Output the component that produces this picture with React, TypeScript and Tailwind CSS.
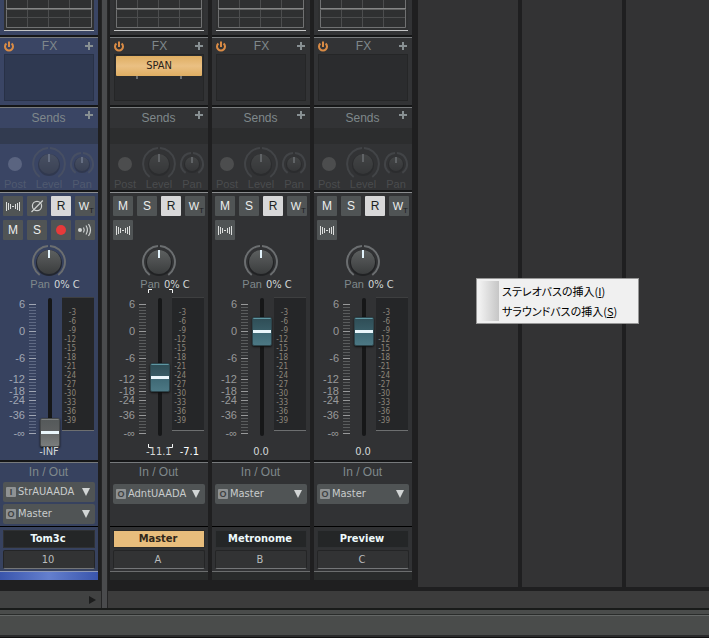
import clsx from "clsx";

type Route = { kind: "I" | "O"; label: string };

type Channel = {
  name: string;
  number: string;
  fader: number;
  level: string;
  peak?: string;
  routes: Route[];
  plugin?: string;
  track?: boolean;
  focused?: boolean;
};

const tomTrack: Channel = {
  name: "Tom3c",
  number: "10",
  fader: 0,
  level: "-INF",
  routes: [
    { kind: "I", label: "StrAUAADA" },
    { kind: "O", label: "Master" },
  ],
  track: true,
};

const buses: Channel[] = [
  {
    name: "Master",
    number: "A",
    fader: 55,
    level: "-11.1",
    peak: "-7.1",
    routes: [{ kind: "O", label: "AdntUAADA" }],
    plugin: "SPAN",
    focused: true,
  },
  { name: "Metronome", number: "B", fader: 101, level: "0.0", routes: [{ kind: "O", label: "Master" }] },
  { name: "Preview", number: "C", fader: 101, level: "0.0", routes: [{ kind: "O", label: "Master" }] },
];

// dB label -> offset in px below the +6 mark
const scaleMarks: [string, number][] = [
  ["6", 0],
  ["0", 27],
  ["-6", 54],
  ["-12", 75],
  ["-18", 87],
  ["-24", 96],
  ["-36", 111],
  ["-∞", 129],
];
const ticks = Array.from({ length: 44 }, (_, i) => i * 3);
const meterMarks = [-3, -6, -9, -12, -15, -18, -21, -24, -27, -30, -33, -36, -39];

const uiFont = "font-['DejaVu_Sans_Condensed','DejaVu_Sans',sans-serif]";

function PowerIcon() {
  return (
    <svg width="10" height="11" viewBox="0 0 10 11" fill="none" stroke="#d98b45" strokeWidth="2" className="block">
      <path d="M2.400 2.500A4 4 0 1 0 7.600 2.500" />
      <path d="M5 0.500V6" />
    </svg>
  );
}

function PlusIcon() {
  return (
    <svg width="8" height="8" viewBox="0 0 8 8" fill="#889093" className="block">
      <path d="M3 0h2v3h3v2H5v3H3V5H0V3h3z" />
    </svg>
  );
}

function InterleaveIcon() {
  return (
    <svg width="20" height="20" viewBox="0 0 20 20" fill="#dcdedd">
      <path d="M3 6h1v9H3zM5 7h1v7H5zM7 8h1v5H7zM9 10h2v1H9zM12 8h1v5h-1zM14 7h1v7h-1zM16 6h1v9h-1z" />
    </svg>
  );
}

function PhaseIcon() {
  return (
    <svg width="20" height="20" viewBox="0 0 20 20" fill="none" stroke="#cfd2d1" strokeWidth="1.2">
      <circle cx="10" cy="10" r="4.600" />
      <path d="M4.500 16L15.800 4.500" />
    </svg>
  );
}

function EchoIcon() {
  return (
    <svg width="20" height="20" viewBox="0 0 20 20" fill="none" stroke="#cfd2d1" strokeWidth="1.200">
      <circle cx="5" cy="10" r="2" fill="#cfd2d1" stroke="none" />
      <path d="M8.500 7.500Q10 10 8.500 12.500M11 5.500Q13.800 10 11 14.500M13.500 4Q17.500 10 13.500 16" />
    </svg>
  );
}

function Knob({ size, label, dim }: { size: "sm" | "md" | "lg"; label: string; dim?: boolean }) {
  const r = size === "sm" ? 7 : size === "md" ? 10 : 12;
  const ring = size === "sm" ? 11 : 16;
  const box = ring * 2 + 2;
  const c = box / 2;
  const s = ring * 0.58;
  const h = ring * 0.81;
  return (
    <span className={clsx("relative block", dim && "opacity-40")}>
      <svg width={box} height={box} className="block overflow-visible">
        <defs>
          <linearGradient id={`knob-${size}`} x1="0" y1="0" x2="0" y2="1">
            <stop offset="0" stopColor="#5d6060" />
            <stop offset="1" stopColor="#3b3d3e" />
          </linearGradient>
        </defs>
        <path
          d={`M${c - s} ${c + h}A${ring} ${ring} 0 0 1 ${c - 1} ${c - ring}M${c + 1} ${c - ring}A${ring} ${ring} 0 0 1 ${c + s} ${c + h}`}
          fill="none"
          stroke={dim ? "#5b5f63" : "#6b6e70"}
          strokeWidth="2"
        />
        <circle cx={c} cy={c + 1} r={r + 1} fill="#1c1d1f" opacity="0.75" />
        <circle cx={c} cy={c} r={r} fill={`url(#knob-${size})`} />
        <rect x={c - 1} y={c - r} width="2" height={size === "sm" ? 6 : 8} fill={dim ? "#a6acb0" : "#e2f3fb"} />
      </svg>
      <input type="range" aria-label={label} min={-100} max={100} defaultValue={0} className="absolute inset-0 h-full w-full opacity-0" />
    </span>
  );
}

function EqGraph({ track }: { track?: boolean }) {
  return (
    <div className={clsx("h-[35px]", track ? "bg-[#3a4564]" : "bg-[#323335]")}>
      <svg width="98" height="35" className="block">
        <rect x="4" width="90" height="31" fill="#2f3031" />
        <path d="M27.500 0V27M48.500 0V27M69.500 0V27M7 17.500H92" stroke="#4c4d4e" />
        <path d="M6.500 0V27.500H91.500V0" stroke="#707172" fill="none" />
        <path d="M6 8.500H92" stroke="#858686" strokeWidth="1" />
        <path d="M6 9.500H92" stroke="#606161" />
        <path d="M4 30.500H94" stroke="#c3c4c5" />
      </svg>
    </div>
  );
}

function FxRack({ channel }: { channel: Channel }) {
  const { track, plugin } = channel;
  return (
    <section className={clsx("h-[68px] border-t border-[#777a7c]", track ? "bg-[#3a4564]" : "bg-[#323335]")}>
      <div className="flex h-4 items-center justify-between pl-1 pr-[5px]">
        <button aria-label="FX power">
          <PowerIcon />
        </button>
        <span className="text-xs leading-4 text-[#7f888b]">FX</span>
        <button aria-label="Add FX">
          <PlusIcon />
        </button>
      </div>
      <div
        className={clsx(
          "mx-1 h-[47px] border p-px",
          track ? "border-[#283146] bg-[#2f3951]" : "border-[#252627] bg-[#2b2c2e]"
        )}
      >
        {plugin && (
          <>
            <button
              className={clsx(
                "block h-5 w-full rounded-[1px] bg-linear-to-b from-[#dfae62] via-[#eac083] to-[#dfae62] text-[11px] leading-5 text-[#2a2118]",
                uiFont
              )}
            >
              {plugin}
            </button>
            <div className="flex justify-between px-5">
              <i className="h-[3px] w-0.5 bg-[#6b6e70]" />
              <i className="h-[3px] w-0.5 bg-[#6b6e70]" />
            </div>
          </>
        )}
      </div>
    </section>
  );
}

function Sends({ track }: { track?: boolean }) {
  return (
    <section className={clsx("border-t border-[#777a7c]", track ? "bg-[#3a4564]" : "bg-[#323335]")}>
      <div className="flex h-5 justify-between pl-3 pr-[5px]">
        <span />
        <span className="text-xs leading-5 text-[#7f888b]">Sends</span>
        <button aria-label="Add send" className="h-[14px]">
          <PlusIcon />
        </button>
      </div>
      <div className={clsx("h-4", track ? "bg-[#323b50]" : "bg-[#2c2d2e]")} />
      <div className="h-[46px] pt-0.5">
        <div className="grid h-9 grid-cols-[30px_38px_28px] items-center justify-items-center">
          <button aria-label="Post" className={clsx("size-[14px] rounded-full", track ? "bg-[#5a6480]" : "bg-[#4c4d4e]")} />
          <Knob size="md" label="Send level" dim />
          <Knob size="sm" label="Send pan" dim />
        </div>
        <div
          className={clsx(
            "-mt-1 grid h-3 grid-cols-[30px_38px_28px] justify-items-center text-[11px] leading-3",
            track ? "text-[#505a70]" : "text-[#4a4c4e]"
          )}
        >
          <span>Post</span>
          <span>Level</span>
          <span>Pan</span>
        </div>
      </div>
    </section>
  );
}

const stripButton = "relative flex size-5 items-center justify-center rounded-[1px] bg-[#505455] text-xs text-[#eceeed]";

function StripButtons({ track }: { track?: boolean }) {
  const mute = <button className={stripButton}>M</button>;
  const solo = <button className={stripButton}>S</button>;
  return (
    <div className="grid h-11 grid-cols-[repeat(4,20px)] content-start gap-1 px-[3px]">
      {track ? (
        <>
          <button aria-label="Interleave" className={stripButton}>
            <InterleaveIcon />
          </button>
          <button aria-label="Phase" className={stripButton}>
            <PhaseIcon />
          </button>
        </>
      ) : (
        <>
          {mute}
          {solo}
        </>
      )}
      <button className="size-5 rounded-[1px] bg-[#d8d8d9] text-xs leading-5 text-[#1d1e1f]">R</button>
      <button className={stripButton}>
        <span className="pr-0.5 text-[11px]">W</span>
        <span className="absolute bottom-px right-px text-[8px] leading-[8px] text-[#1f2122]">T</span>
      </button>
      {track ? (
        <>
          {mute}
          {solo}
          <button aria-label="Record arm" className={stripButton}>
            <span className="size-2.5 rounded-full bg-[#e63a3a]" />
          </button>
          <button aria-label="Input echo" className={stripButton}>
            <EchoIcon />
          </button>
        </>
      ) : (
        <button aria-label="Interleave" className={stripButton}>
          <InterleaveIcon />
        </button>
      )}
    </div>
  );
}

function Fader({ channel }: { channel: Channel }) {
  const { track, focused } = channel;
  return (
    <div className="relative flex h-[147px]">
      <svg width="36" height="147" className="block shrink-0">
        {ticks.map((y) => (
          <rect key={y} x="29" y={y + 7} width="7" height="1" fill={track ? "#5f6a84" : "#5a5c5d"} />
        ))}
        {scaleMarks.map(([label, y]) => (
          <g key={label}>
            <rect x="29" y={y + 7} width="7" height="1" fill={track ? "#a0a6b3" : "#98999a"} />
            <text x="25" y={y + 11} textAnchor="end" fontSize="11" fill={track ? "#a0a6b3" : "#98999a"}>
              {label}
            </text>
          </g>
        ))}
      </svg>
      <div className="relative ml-1 w-5">
        <div className="mx-auto mt-px h-[138px] w-1 rounded-sm bg-[#161718]" />
        <input
          type="range"
          aria-label={`${channel.name} volume`}
          min={0}
          max={128}
          defaultValue={channel.fader}
          className={clsx(
            "absolute -top-[7px] left-0 m-0 h-[157px] w-5 appearance-none bg-transparent outline-none [direction:rtl] [writing-mode:vertical-lr]",
            "[&::-webkit-slider-thumb]:h-[29px] [&::-webkit-slider-thumb]:w-5 [&::-webkit-slider-thumb]:appearance-none [&::-webkit-slider-thumb]:rounded-[2px] [&::-webkit-slider-thumb]:border [&::-webkit-slider-thumb]:shadow-[0_1px_2px_#111]",
            track
              ? "[&::-webkit-slider-thumb]:border-[#454849] [&::-webkit-slider-thumb]:bg-[linear-gradient(#7d8080_0_1px,#55595a_1px,#5c5f60_12px,#e9f6fb_12px_15px,#676a6a_15px,#7a7d7d)]"
              : "[&::-webkit-slider-thumb]:border-[#2d454c] [&::-webkit-slider-thumb]:bg-[linear-gradient(#5f97a3_0_1px,#2f4e57_1px,#385b65_12px,#e9f6fb_12px_15px,#3f6975_15px,#4c7884)]"
          )}
        />
      </div>
      <div
        className={clsx(
          "ml-0.5 flex h-[134px] w-8 flex-col border-b border-t border-b-[#6d6f70] border-t-[#3e3f40] bg-[#252628]",
          "pb-2 pt-[10px]"
        )}
      >
        <ol className={clsx("flex w-[14px] flex-1 flex-col justify-between text-right text-[8px] leading-[9px] text-[#8c857a]", uiFont)}>
          {meterMarks.map((m) => (
            <li key={m}>{m}</li>
          ))}
        </ol>
      </div>
      {focused && (
        <svg width="25" height="161" className="absolute -top-2 left-[38px]" fill="none" stroke="#f2f4f4">
          <path d="M.500 4V.500H4M21 .500h3.500V4M.500 155v3.500H4M21 158.500h3.500V155" />
        </svg>
      )}
    </div>
  );
}

function RouteSelect({ route }: { route: Route }) {
  return (
    <label className="relative block h-5">
      <span className="absolute left-[3px] top-[5px] size-[10px] rounded-[1px] bg-[#8f9293] text-center text-[9px] font-bold leading-[10px] text-[#3e4142]">
        {route.kind}
      </span>
      <select
        aria-label={route.kind === "I" ? "Input" : "Output"}
        className={clsx(
          "block h-5 w-full appearance-none overflow-hidden rounded-[2px] bg-[#505455] pl-[15px] pr-[17px] text-[11px] leading-5 text-[#c9cccc]",
          uiFont
        )}
      >
        <option>{route.label}</option>
      </select>
      <svg width="8" height="8" className="absolute right-[5px] top-1.5" fill="#d2d5d5">
        <path d="M0 0h8L4 8z" />
      </svg>
    </label>
  );
}

function ChannelStrip({ channel }: { channel: Channel }) {
  const { track, focused } = channel;
  const tone = track ? "bg-[#37425f]" : "bg-[#313234]";
  return (
    <article className="flex w-[98px] shrink-0 flex-col gap-0.5 bg-[#151617]">
      <EqGraph track={track} />
      <FxRack channel={channel} />
      <Sends track={track} />
      <section className={clsx("border-t border-[#8b8d8f] pb-px pt-[3px]", tone)}>
        <StripButtons track={track} />
        <div className="flex h-[38px] justify-center pt-[5px]">
          <Knob size="lg" label={`${channel.name} pan`} />
        </div>
        <p className="relative flex h-3 items-baseline justify-center gap-1 pl-3 text-[11px] leading-3 text-[#7f888b]">
          Pan <span className={clsx("text-[#d3d7d8]", uiFont)}>0% C</span>
        </p>
        <div className="pt-[7px]">
          <Fader channel={channel} />
        </div>
        <p
          className={clsx(
            "relative flex h-[15px] justify-center gap-2 text-[11px] leading-4 text-[#d3d7d8]",
            channel.peak && "pl-[27px]",
            uiFont
          )}
        >
          {channel.level}
          {channel.peak && <span className="text-white">{channel.peak}</span>}
        </p>
      </section>
      <div>
        <section className={clsx("h-16 border-t border-[#777a7c] px-[3px]", tone)}>
          <h3 className="h-[19px] pr-px text-center text-xs leading-[18px] text-[#7f888b]">In / Out</h3>
          <div className={clsx("flex flex-col gap-0.5", !track && "pt-0.5")}>
            {channel.routes.map((r) => (
              <RouteSelect key={r.kind} route={r} />
            ))}
          </div>
        </section>
        <section className={clsx("h-[45px] border-t border-t-black px-[3px] pt-[3px]", tone)}>
          <div
            className={clsx(
              "h-[18px] border pr-0.5 text-center text-[11px] font-bold leading-4",
              focused ? "border-[#2b2b2b] bg-[#e8bd7c] text-[#31271a]" : "border-[#2f3133] bg-[#242627] text-[#eefafc]",
              uiFont
            )}
          >
            {channel.name}
          </div>
          <div
            className={clsx(
              "mt-0.5 h-[19px] rounded-[2px] border border-[#242526] border-b-[#747678] bg-[#323334] pr-0.5 text-center text-[11px] leading-[17px] text-[#b9bcbd]",
              uiFont
            )}
          >
            {channel.number}
          </div>
        </section>
        <div
          className={clsx(
            "h-[9px] border-t",
            track
              ? "border-[#8f99b5] bg-linear-to-r from-[#3a55ac] via-[#647fce] to-[#3a55ac]"
              : "border-[#6b6d6e] bg-[#292b2b]"
          )}
        />
      </div>
    </article>
  );
}

const menuItems = [
  { text: "ステレオバスの挿入", accel: "I" },
  { text: "サラウンドバスの挿入", accel: "S" },
];

function ContextMenu() {
  return (
    <div
      role="menu"
      className="absolute left-[476px] top-[278px] flex w-[163px] border border-[#979797] bg-[#f0f0f0] py-0.5 pl-[3px]"
    >
      <div className="w-[19px] bg-linear-to-r from-[#f0f0f0] to-[#c6c6c6]" />
      <div className="flex flex-1 flex-col">
        {menuItems.map((item) => (
          <button
            key={item.accel}
            role="menuitem"
            className="h-5 whitespace-nowrap pl-[3px] text-left font-['Noto_Sans_CJK_JP',sans-serif] text-[11px] leading-5 text-black [font-feature-settings:'palt']"
          >
            {item.text}(<u>{item.accel}</u>)
          </button>
        ))}
      </div>
    </div>
  );
}

export default function App() {
  return (
    <main className="relative flex min-h-screen flex-col overflow-hidden bg-[#1f1f20] font-['Liberation_Sans',Arial,sans-serif]">
      <div className="flex">
        <div className="flex w-[101px] shrink-0 flex-col justify-between">
          <ChannelStrip channel={tomTrack} />
          <div className="flex h-[17px] items-center justify-end bg-[#414242] pr-[5px]">
            <button aria-label="Scroll right">
              <svg width="7" height="8" className="block" fill="#1c1d1d">
                <path d="M0 0L7 4L0 8z" />
              </svg>
            </button>
          </div>
        </div>
        <div className="w-[7px] shrink-0 border-x border-[#252526] bg-[#4a4b4d]" />
        <div className="flex min-w-0 flex-1 flex-col">
          <div className="flex pb-[11px] pl-0.5">
            <div className="flex shrink-0 gap-1">
              {buses.map((bus) => (
                <ChannelStrip key={bus.name} channel={bus} />
              ))}
            </div>
            <div className="-mb-[7px] ml-1.5 flex min-w-0 flex-1 gap-1">
              <div className="w-[100px] shrink-0 bg-[#333334]" />
              <div className="w-[100px] shrink-0 bg-[#333334]" />
              <div className="flex-1 bg-[#333334]" />
            </div>
          </div>
          <div className="h-[17px] bg-[#3c3c3c]" />
        </div>
      </div>
      <footer className="flex flex-1 flex-col border-t-2 border-[#191b1a] bg-[#4a4c4b]">
        <div className="h-[5px] border-b border-[#2a2c2b]" />
        <div className="flex-1 border-b-2 border-t border-b-[#2a2a2b] border-t-[#646766]" />
        <div className="h-px bg-[#111]" />
      </footer>
      <ContextMenu />
    </main>
  );
}
